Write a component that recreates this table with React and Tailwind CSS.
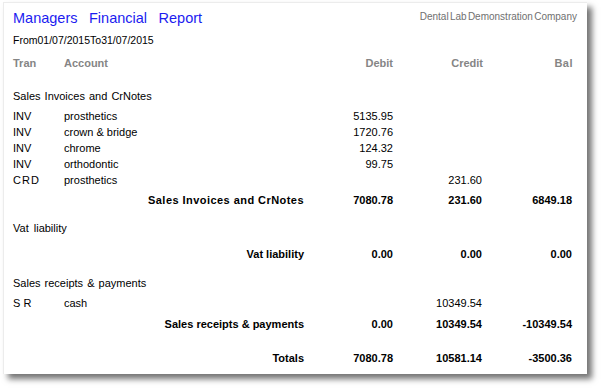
export default function App() {
  const font = { fontFamily: '"Liberation Sans", Arial, sans-serif' };
  const Row = ({ tran, acc, d, c, b, className = "" }) => (
    <div className={"flex h-[16px] items-center text-[11px] text-black " + className}>
      <div className="w-[51px] whitespace-pre">{tran}</div>
      <div className="w-[240px]">{acc}</div>
      <div className="w-[89px] text-right">{d}</div>
      <div className="w-[89px] text-right">{c}</div>
      <div className="w-[90px] text-right">{b}</div>
    </div>
  );
  const Sub = ({ label, d, c, b, className = "", labelClass = "" }) => (
    <div className={"flex h-[16px] items-center text-[11px] font-bold text-black " + className}>
      <div className={"w-[291px] text-right whitespace-nowrap " + labelClass}>{label}</div>
      <div className="w-[89px] text-right">{d}</div>
      <div className="w-[89px] text-right">{c}</div>
      <div className="w-[90px] text-right">{b}</div>
    </div>
  );
  return (
    <div className="w-[601px] h-[389px] bg-white pt-[2px] pl-[3px]" style={font}>
      <div className="w-[584px] h-[372px] bg-white border-t border-l border-[#ececec] shadow-[5px_5px_6px_rgba(0,0,0,0.55)] pl-[9px] pr-[10px] pt-[6px] flex flex-col">
        <div className="flex h-[18px] items-center justify-between">
          <div className="text-[14.5px] text-[#1c1cf0] [word-spacing:7.5px] leading-[18px]">Managers Financial Report</div>
          <div className="text-[10px] text-[#707070] [word-spacing:-1.5px] -mt-[3px]">Dental Lab Demonstration Company</div>
        </div>
        <div className="mt-[6px] h-[16px] flex items-center text-[10.5px] text-black">From01/07/2015To31/07/2015</div>
        <div className="mt-[6px] flex h-[16px] items-center text-[11px] font-bold text-[#858585]">
          <div className="w-[51px]">Tran</div>
          <div className="w-[240px]">Account</div>
          <div className="w-[89px] text-right">Debit</div>
          <div className="w-[90px] text-right">Credit</div>
          <div className="w-[90px] text-right tracking-[0.5px]">Bal</div>
        </div>
        <div className="mt-[17px] h-[16px] flex items-center text-[11px] text-black [word-spacing:1px]">Sales Invoices and CrNotes</div>
        <Row className="mt-[4px]" tran="INV" acc="prosthetics" d="5135.95" />
        <Row tran="INV" acc="crown & bridge" d="1720.76" />
        <Row tran="INV" acc="chrome" d="124.32" />
        <Row tran="INV" acc="orthodontic" d="99.75" />
        <Row tran={<span className="tracking-[1px]">CRD</span>} acc="prosthetics" c="231.60" />
        <Sub className="mt-[4px]" labelClass="tracking-[0.45px]" label="Sales Invoices and CrNotes" d="7080.78" c="231.60" b="6849.18" />
        <div className="mt-[12px] h-[16px] flex items-center text-[11px] text-black [word-spacing:2px]">Vat liability</div>
        <Sub className="mt-[10px]" label="Vat liability" d="0.00" c="0.00" b="0.00" />
        <div className="mt-[13px] h-[16px] flex items-center text-[11px] text-black [word-spacing:1px]">Sales receipts &amp; payments</div>
        <Row className="mt-[4px]" tran="S R" acc="cash" c="10349.54" />
        <Sub className="mt-[5px]" label="Sales receipts & payments" d="0.00" c="10349.54" b="-10349.54" />
        <Sub className="mt-[18px]" label="Totals" d="7080.78" c="10581.14" b="-3500.36" />
      </div>
    </div>
  );
}
